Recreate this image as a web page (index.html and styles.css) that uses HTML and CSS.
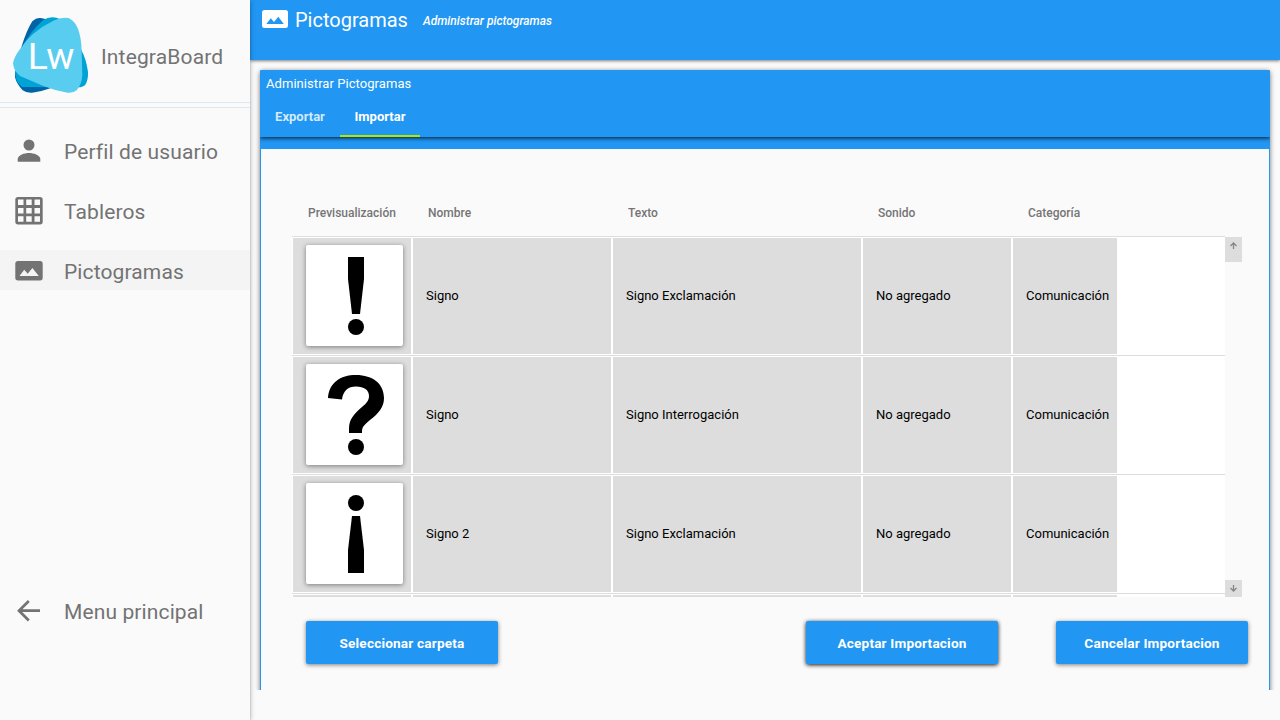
FILE: index.html
```html
<!DOCTYPE html>
<html lang="es">
<head>
<meta charset="utf-8">
<title>IntegraBoard</title>
<link rel="stylesheet" href="styles.css">
</head>
<body>
<div class="app">
  <aside class="sidebar">
    <div class="brand">
      <svg class="logo" viewBox="36 48 234 234">
        <path fill="#0063a6" d="M64 142Q80 90 97 64Q108 53 122 54L136 57L160 90L100 150L64 160ZM45 215L160 262Q120 276 96 278Q78 279 68 271Q50 252 45 232Z"/>
        <path fill="#00a3d5" d="M68 138Q95 90 130 60Q148 48 172 54L225 80L244 150Q258 175 264 215Q265 240 256 254Q250 261 235 262L66 261Q45 245 45 215L68 155Z"/>
        <path fill="#58cdf0" d="M160 62Q183 50 205 54Q222 60 234 86Q244 112 245 155L247 225Q246 252 230 271Q220 280 203 278Q165 272 130 258L60 228Q41 213 39 190Q42 172 58 150Q92 95 160 62Z"/>
        <text x="83" y="207" class="logo-text" textLength="140" lengthAdjust="spacingAndGlyphs">Lw</text>
      </svg>
      <span class="brand-name">IntegraBoard</span>
    </div>
    <nav class="menu">
      <a class="item"><svg class="icon" viewBox="0 0 30 30"><circle cx="15" cy="9" r="5.500"/><path d="M3.700 25.700v-2.600c0-4 7-6.100 11.300-6.100s11.300 2.100 11.300 6.100v2.600z"/></svg>Perfil de usuario</a>
      <a class="item"><svg class="icon" viewBox="0 0 30 30"><path fill-rule="evenodd" d="M4 1h22a2.700 2.700 0 0 1 2.700 2.700v22A2.700 2.700 0 0 1 26 28.400H4a2.700 2.700 0 0 1-2.700-2.700v-22A2.700 2.700 0 0 1 4 1zM4 3.500v5.500h5.500V3.500zm8.200 0v5.500h5.500V3.500zm8.300 0v5.500H26V3.500zM4 12v5.500h5.500V12zm8.200 0v5.500h5.500V12zm8.300 0v5.500H26V12zM4 20.300v5.500h5.500v-5.500zm8.200 0v5.500h5.500v-5.500zm8.300 0v5.500H26v-5.500z"/></svg>Tableros</a>
      <a class="item active"><svg class="icon" viewBox="0 0 30 30"><path fill-rule="evenodd" d="M4 5h22a2.700 2.700 0 0 1 2.700 2.700v14A2.700 2.700 0 0 1 26 24.400H4a2.700 2.700 0 0 1-2.700-2.700v-14A2.700 2.700 0 0 1 4 5zM5.500 20h19.300l-6.400-8-4.700 5.800-3.500-4z"/></svg>Pictogramas</a>
      <a class="item back"><svg class="icon" viewBox="0 0 30 30"><path class="arrow" d="M26 14.700H5.600M14.800 5L5 14.700l9.800 9.800"/></svg>Menu principal</a>
    </nav>
  </aside>
  <main class="main">
    <header class="topbar">
      <svg class="topicon" viewBox="0 0 26 18"><path fill-rule="evenodd" d="M2.500 0h21A2.500 2.500 0 0 1 26 2.500v13a2.500 2.500 0 0 1-2.500 2.500h-21A2.500 2.500 0 0 1 0 15.500v-13A2.500 2.500 0 0 1 2.500 0zM4.300 14h17.500l-5.500-7.300-4.300 5.400-3.200-3.900z"/></svg>
      <h1>Pictogramas</h1>
      <em>Administrar pictogramas</em>
    </header>
    <div class="content">
      <section class="card">
        <div class="card-head">
          <div class="card-title">Administrar Pictogramas</div>
          <div class="tabs"><span class="tab">Exportar</span><span class="tab selected">Importar</span></div>
        </div>
        <div class="card-body">
          <div class="thead cols"><span>Previsualización</span><span>Nombre</span><span>Texto</span><span>Sonido</span><span>Categoría</span></div>
          <div class="table">
            <div class="rows">
              <div class="row cols">
                <div class="cell"><div class="thumb"><svg viewBox="0 0 97 101"><path d="M42 12h16v22l-4 35h-8l-4-35z"/><circle cx="50" cy="82" r="8"/></svg></div></div>
                <div class="cell">Signo</div><div class="cell">Signo Exclamación</div><div class="cell">No agregado</div><div class="cell">Comunicación</div>
              </div>
              <div class="row cols">
                <div class="cell"><div class="thumb"><svg viewBox="0 0 97 101"><path d="M22 34C23 19 34 11 50 11C67 11 78 20 78 34C78 43 73 49 64 56C57 62 56 63 56 69H43V65C43 55 48 50 56 43C61 39 63 36 63 32C63 26 58 22.500 50 22.500C42 22.500 37 27 36 35.500Z"/><circle cx="50" cy="83" r="8"/></svg></div></div>
                <div class="cell">Signo</div><div class="cell">Signo Interrogación</div><div class="cell">No agregado</div><div class="cell">Comunicación</div>
              </div>
              <div class="row cols">
                <div class="cell"><div class="thumb"><svg viewBox="0 0 97 101"><path d="M42 90h16V67l-4-34h-8l-4 34z"/><circle cx="50" cy="20" r="8"/></svg></div></div>
                <div class="cell">Signo 2</div><div class="cell">Signo Exclamación</div><div class="cell">No agregado</div><div class="cell">Comunicación</div>
              </div>
              <div class="row cols"><div class="cell"></div><div class="cell"></div><div class="cell"></div><div class="cell"></div><div class="cell"></div></div>
            </div>
            <div class="scroll">
              <div class="sb up"><svg viewBox="0 0 9 9"><path d="M4.500 8v-6M1.500 5l3-3 3 3"/></svg></div>
              <div class="sb"><svg viewBox="0 0 9 9"><path d="M4.500 1v6M1.500 4l3 3 3-3"/></svg></div>
            </div>
          </div>
          <div class="actions">
            <button class="btn">Seleccionar carpeta</button>
            <button class="btn accept">Aceptar Importacion</button>
            <button class="btn">Cancelar Importacion</button>
          </div>
        </div>
      </section>
    </div>
  </main>
</div>
</body>
</html>
```

FILE: styles.css
```css
* { box-sizing: border-box; }
body { margin: 0; background: #fafafa; font-family: Roboto, sans-serif; color: #000; }
.app { display: flex; width: 1280px; height: 720px; overflow: hidden; }
.sidebar { width: 250px; height: 720px; background: #fafafa; display: flex; flex-direction: column; box-shadow: 0 2px 2px rgba(0,0,0,.14), 0 3px 1px -2px rgba(0,0,0,.2), 0 1px 5px rgba(0,0,0,.3); position: relative; z-index: 2; color: #737373; }
.brand { height: 108px; flex: none; padding: 16px 0 0 12px; display: flex; border-bottom: 1px solid #e0e6ee; background: linear-gradient(#e0e6ee, #e0e6ee) 0 102px / 100% 1px no-repeat; }
.logo { width: 78px; height: 78px; flex: none; }
.logo-text { font: 108px Roboto, sans-serif; fill: #fff; }
.brand-name { font-size: 21px; line-height: 24px; margin: 29px 0 0 11px; letter-spacing: .15px; }
.menu { flex: 1; display: flex; flex-direction: column; gap: 20px; padding: 22px 0 90px; }
.item { height: 40px; flex: none; display: flex; align-items: center; padding: 3px 0 0 14.4px; font-size: 21px; letter-spacing: .12px; }
.icon { width: 30px; height: 30px; margin: -1px 19.6px 0 0; fill: #737373; }
.arrow { fill: none; stroke: #737373; stroke-width: 2.7; }
.active { background: #f4f4f4; }
.back { margin-top: auto; }
.main { flex: 1; min-width: 0; }
.topbar { height: 60px; background: #2196f3; color: #fff; display: flex; align-items: flex-start; padding-left: 12px; box-shadow: 0 1px 3px rgba(0,0,0,.5); position: relative; z-index: 1; }
.topicon { width: 26px; height: 18px; margin-top: 10px; fill: #fff; }
h1 { font-size: 20px; font-weight: 400; line-height: 24px; margin: 8px 0 0 7px; }
.topbar em { font-size: 12px; font-weight: 500; line-height: 16px; margin: 13px 0 0 15px; }
.content { height: 630px; padding: 10px 10px 0; overflow: hidden; }
.card { height: 660px; border: 1px solid #2196f3; border-top: 0; border-radius: 3px; box-shadow: 0 1px 5px rgba(0,0,0,.55); background: #2196f3; }
.card-head { height: 67px; color: #fff; border-radius: 2px 2px 0 0; margin: 0 -1px 12px; background: #2196f3; box-shadow: 0 1px 4px rgba(0,0,0,.85); clip-path: inset(0 0 -10px 0); }
.card-title { font-size: 13px; font-weight: 400; line-height: 17px; letter-spacing: .06px; padding: 5px 0 0 6px; height: 27px; }
.tabs { display: flex; height: 40px; font-size: 13px; font-weight: 700; line-height: 40px; text-align: center; }
.tab { width: 80px; color: #d3eafd; }
.selected { color: #fff; border-bottom: 2px solid #aeea00; }
.card-body { background: #fafafa; height: 581px; padding: 50px 0 0 31px; }
.cols { display: grid; grid-template-columns: 120px 200px 250px 150px 106px; }
.thead { height: 37px; font-size: 12px; font-weight: 500; line-height: 28px; color: #757575; }
.thead span { padding-left: 16px; }
.table { width: 950px; height: 361px; display: flex; }
.rows { width: 933px; overflow: hidden; background: #fff; }
.row { border-top: 1px solid #ddd; height: 119px; }
.cell { border: 1px solid #fff; background: #ddd; display: flex; align-items: center; padding: 0 0 2px 13px; font-size: 13px; white-space: nowrap; }
.thumb { width: 97px; height: 101px; background: #fff; border-radius: 2px; box-shadow: 0 1px 5px rgba(0,0,0,.45); }
.thumb svg { display: block; }
.scroll { width: 17px; display: flex; flex-direction: column; justify-content: space-between; padding-top: 1px; }
.sb { height: 17px; background: #ddd; padding: 4px; }
.sb svg { display: block; width: 9px; height: 9px; fill: none; stroke: #858585; stroke-width: 1.3; }
.up { height: 25px; }
.actions { display: flex; padding: 24px 21px 0 14px; }
.btn { width: 192px; height: 43px; border: 0; border-radius: 2px; background: #2196f3; color: #fff; font: 700 13.6px Roboto, sans-serif; letter-spacing: .18px; box-shadow: 0 1px 4px rgba(0,0,0,.5); padding: 1px 0 0; }
.accept { margin: 0 58px 0 auto; box-shadow: 0 1px 4px rgba(0,0,0,.95); }
```
